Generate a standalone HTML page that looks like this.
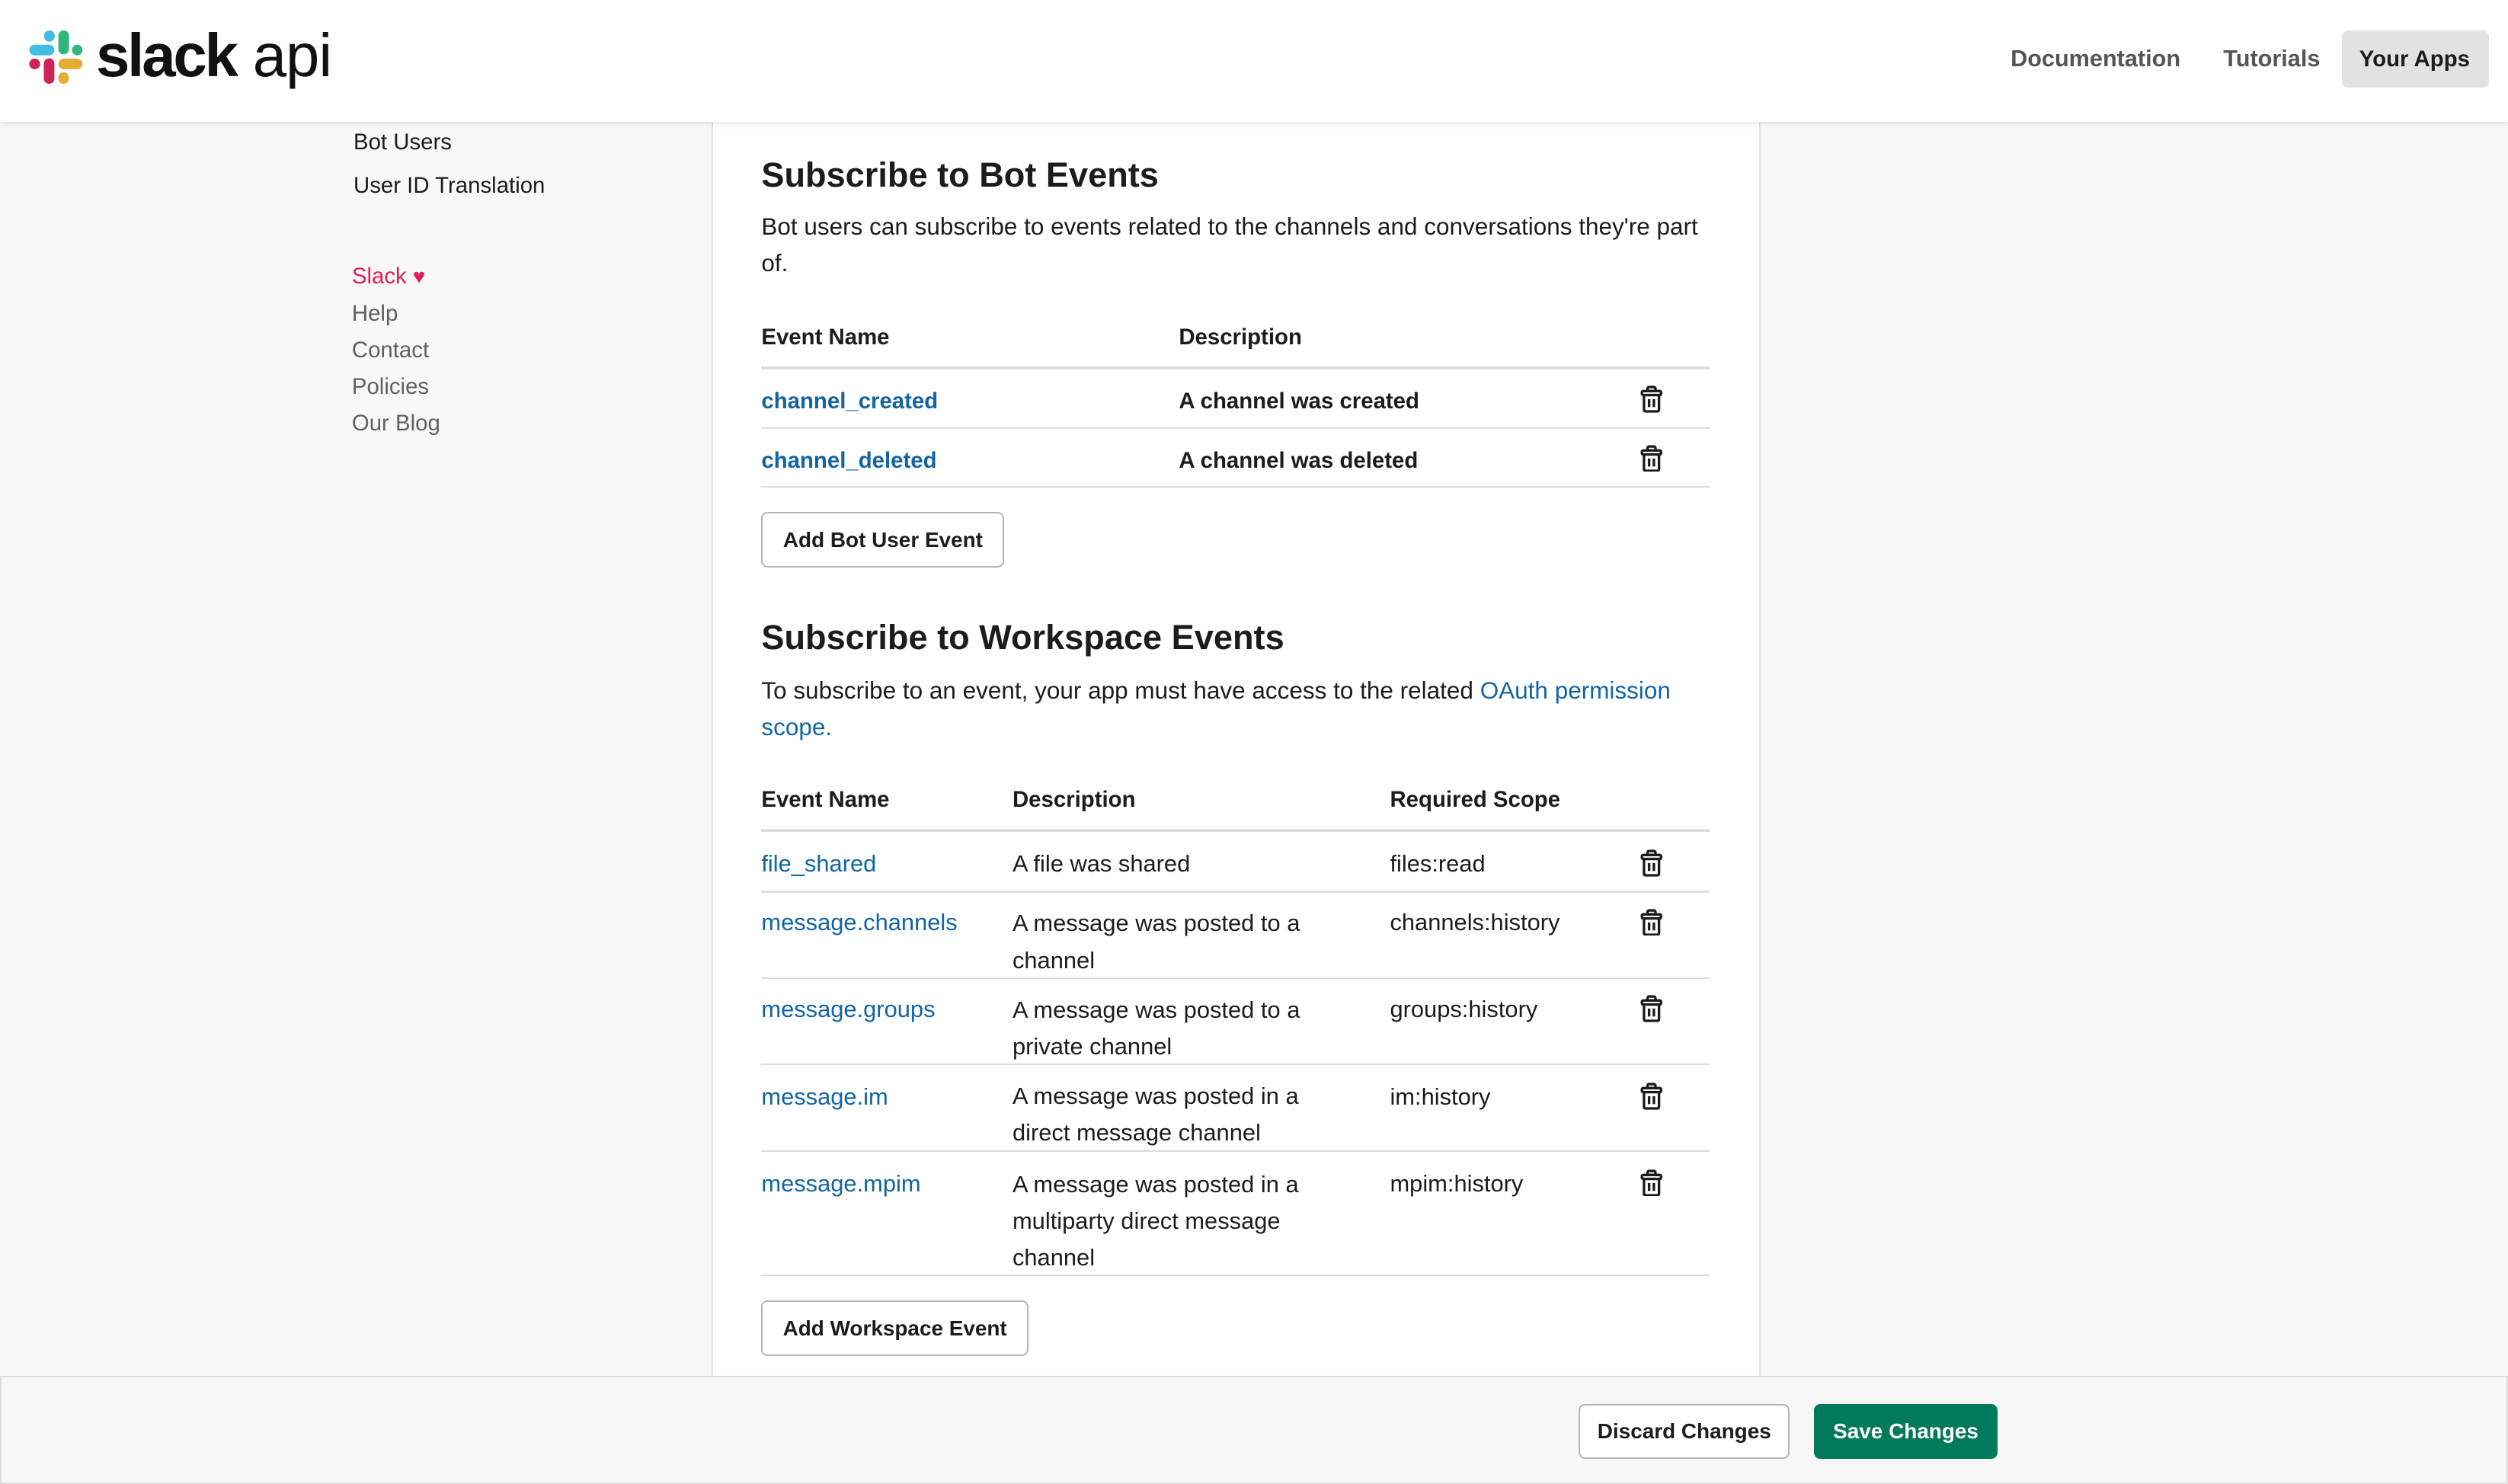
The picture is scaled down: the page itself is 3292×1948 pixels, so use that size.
<!DOCTYPE html>
<html><head><meta charset="utf-8"><style>
html,body{margin:0;padding:0;}
body{width:3292px;height:1948px;overflow:hidden;background:#f8f8f8;font-family:"Liberation Sans",sans-serif;}
#w{position:relative;width:1568px;height:928px;zoom:2.0995;background:#f8f8f8;color:#1d1c1d;}
.a{position:absolute;white-space:nowrap;line-height:20px;}
.t{font-size:14px;}
.m{font-size:14.7px;}
.p{font-size:15px;}
.l{color:#1264a3;}
.h{font-size:14px;font-weight:bold;color:#1d1c1d;}
.ln{position:absolute;left:476px;width:593px;height:1px;background:#dddddd;}
.btn{position:absolute;border:1px solid #b5b5b5;border-radius:4px;background:#fff;font-size:13.3px;font-weight:bold;text-align:center;box-sizing:border-box;color:#1d1c1d;}
.tr{position:absolute;width:15px;height:17px;}
.hd{font-size:21.5px;line-height:30px;font-weight:bold;}
</style></head><body><div id="w">
<div style="position:absolute;left:445px;top:76px;width:654px;height:790px;background:#fff;border-left:1px solid #e2e2e2;border-right:1px solid #e2e2e2;"></div>
<div style="position:absolute;left:0;top:0;width:1568px;height:76px;background:#fff;box-shadow:0 1px 4px rgba(0,0,0,0.12);"></div>
<svg style="position:absolute;left:0;top:0" width="60" height="60" viewBox="0 0 60 60">
<g stroke-linecap="round" stroke-width="6.6" fill="none">
<line x1="21.6" y1="31.3" x2="30.7" y2="31.3" stroke="#44bde3"/>
<line x1="30.9" y1="22.3" x2="30.9" y2="22.8" stroke="#44bde3"/>
<line x1="39.8" y1="22.3" x2="39.8" y2="30.7" stroke="#2eb67d"/>
<line x1="48.3" y1="31.3" x2="48.3" y2="31.3" stroke="#2eb67d"/>
<line x1="21.6" y1="40" x2="21.8" y2="40" stroke="#cf2257"/>
<line x1="30.7" y1="39.8" x2="30.7" y2="49.1" stroke="#cf2257"/>
<line x1="39.8" y1="40" x2="48.3" y2="40" stroke="#e5ac36"/>
<line x1="39.8" y1="48.5" x2="39.8" y2="49.1" stroke="#e5ac36"/>
</g></svg>
<div class="a" style="left:60px;top:13px;font-size:38px;line-height:44px;font-weight:bold;letter-spacing:-1.5px;color:#111;">slack</div>
<div class="a" style="left:158px;top:13px;font-size:38px;line-height:44px;color:#111;letter-spacing:-0.5px;">api</div>
<div class="a" style="left:1257px;top:27px;font-size:14.6px;color:#555;font-weight:bold;">Documentation</div>
<div class="a" style="left:1390px;top:27px;font-size:14.6px;color:#555;font-weight:bold;">Tutorials</div>
<div style="position:absolute;left:1464px;top:19px;width:92px;height:36px;background:#e2e2e2;border-radius:4px;"></div>
<div class="a" style="left:1475px;top:27px;font-size:14px;color:#1d1c1d;font-weight:bold;">Your Apps</div>
<div class="a t" style="left:221px;top:79px;">Bot Users</div>
<div class="a t" style="left:221px;top:106px;">User ID Translation</div>
<div class="a t" style="left:220px;top:163px;color:#e01e5a;">Slack <span style="font-size:13px">&#9829;</span></div>
<div class="a t" style="left:220px;top:186px;color:#616061;">Help</div>
<div class="a t" style="left:220px;top:209px;color:#616061;">Contact</div>
<div class="a t" style="left:220px;top:232px;color:#616061;">Policies</div>
<div class="a t" style="left:220px;top:255px;color:#616061;">Our Blog</div>
<div class="a hd" style="left:476px;top:95px;">Subscribe to Bot Events</div>
<div class="a p" style="left:476px;top:132px;">Bot users can subscribe to events related to the channels and conversations they're part</div>
<div class="a p" style="left:476px;top:155px;">of.</div>
<div class="a h" style="left:476px;top:201px;">Event Name</div>
<div class="a h" style="left:737px;top:201px;">Description</div>
<div class="ln" style="top:229px;height:2px;"></div>
<div class="a t l" style="left:476px;top:241px;font-weight:bold;">channel_created</div>
<div class="a t" style="left:737px;top:241px;font-weight:bold;">A channel was created</div>
<div class="ln" style="top:267px;"></div>
<div class="a t l" style="left:476px;top:278px;font-weight:bold;">channel_deleted</div>
<div class="a t" style="left:737px;top:278px;font-weight:bold;">A channel was deleted</div>
<div class="ln" style="top:304px;"></div>
<div class="btn" style="left:476px;top:320px;width:152px;height:35px;line-height:33px;">Add Bot User Event</div>
<div class="a hd" style="left:476px;top:384px;">Subscribe to Workspace Events</div>
<div class="a p" style="left:476px;top:422px;">To subscribe to an event, your app must have access to the related <span class="l">OAuth permission</span></div>
<div class="a p l" style="left:476px;top:445px;">scope.</div>
<div class="a h" style="left:476px;top:490px;">Event Name</div>
<div class="a h" style="left:633px;top:490px;">Description</div>
<div class="a h" style="left:869px;top:490px;">Required Scope</div>
<div class="ln" style="top:518px;height:2px;"></div>
<div class="a m l" style="left:476px;top:530px;">file_shared</div>
<div class="a m" style="left:633px;top:530px;">A file was shared</div>
<div class="a m" style="left:869px;top:530px;">files:read</div>
<div class="ln" style="top:557px;"></div>
<div class="a m l" style="left:476px;top:567px;">message.channels</div>
<div class="a m" style="left:633px;top:566px;line-height:23px;">A message was posted to a<br>channel</div>
<div class="a m" style="left:869px;top:567px;">channels:history</div>
<div class="ln" style="top:611px;"></div>
<div class="a m l" style="left:476px;top:621px;">message.groups</div>
<div class="a m" style="left:633px;top:620px;line-height:23px;">A message was posted to a<br>private channel</div>
<div class="a m" style="left:869px;top:621px;">groups:history</div>
<div class="ln" style="top:665px;"></div>
<div class="a m l" style="left:476px;top:676px;">message.im</div>
<div class="a m" style="left:633px;top:674px;line-height:23px;">A message was posted in a<br>direct message channel</div>
<div class="a m" style="left:869px;top:676px;">im:history</div>
<div class="ln" style="top:719px;"></div>
<div class="a m l" style="left:476px;top:730px;">message.mpim</div>
<div class="a m" style="left:633px;top:729px;line-height:23px;">A message was posted in a<br>multiparty direct message<br>channel</div>
<div class="a m" style="left:869px;top:730px;">mpim:history</div>
<div class="ln" style="top:797px;"></div>
<div class="btn" style="left:476px;top:813px;width:167px;height:35px;line-height:33px;">Add Workspace Event</div>
<svg width="0" height="0" style="position:absolute"><defs><g id="tr" fill="none" stroke="#1d1c1d" stroke-width="1.6" stroke-linejoin="round"><rect x="5" y="1" width="5" height="2.5" rx="1"/><rect x="1.5" y="3.5" width="12" height="2.5" rx="0.8"/><path d="M2.8 6 V15 Q2.8 16.2 4 16.2 H11 Q12.2 16.2 12.2 15 V6"/><line x1="6" y1="8.5" x2="6" y2="13.5"/><line x1="9" y1="8.5" x2="9" y2="13.5"/></g></defs></svg>
<svg class="tr" style="left:1025px;top:241px" viewBox="0 0 15 17"><use href="#tr"/></svg>
<svg class="tr" style="left:1025px;top:278px" viewBox="0 0 15 17"><use href="#tr"/></svg>
<svg class="tr" style="left:1025px;top:531px" viewBox="0 0 15 17"><use href="#tr"/></svg>
<svg class="tr" style="left:1025px;top:568px" viewBox="0 0 15 17"><use href="#tr"/></svg>
<svg class="tr" style="left:1025px;top:622px" viewBox="0 0 15 17"><use href="#tr"/></svg>
<svg class="tr" style="left:1025px;top:677px" viewBox="0 0 15 17"><use href="#tr"/></svg>
<svg class="tr" style="left:1025px;top:731px" viewBox="0 0 15 17"><use href="#tr"/></svg>
<div style="position:absolute;left:0;top:860px;width:1566px;height:66px;background:#f7f7f7;border:1px solid #dedede;"></div>
<div class="btn" style="left:987px;top:878px;width:132px;height:34px;line-height:32px;">Discard Changes</div>
<div class="btn" style="left:1134px;top:878px;width:115px;height:34px;line-height:34px;background:#007a5a;border:none;color:#fff;">Save Changes</div>
</div></body></html>
